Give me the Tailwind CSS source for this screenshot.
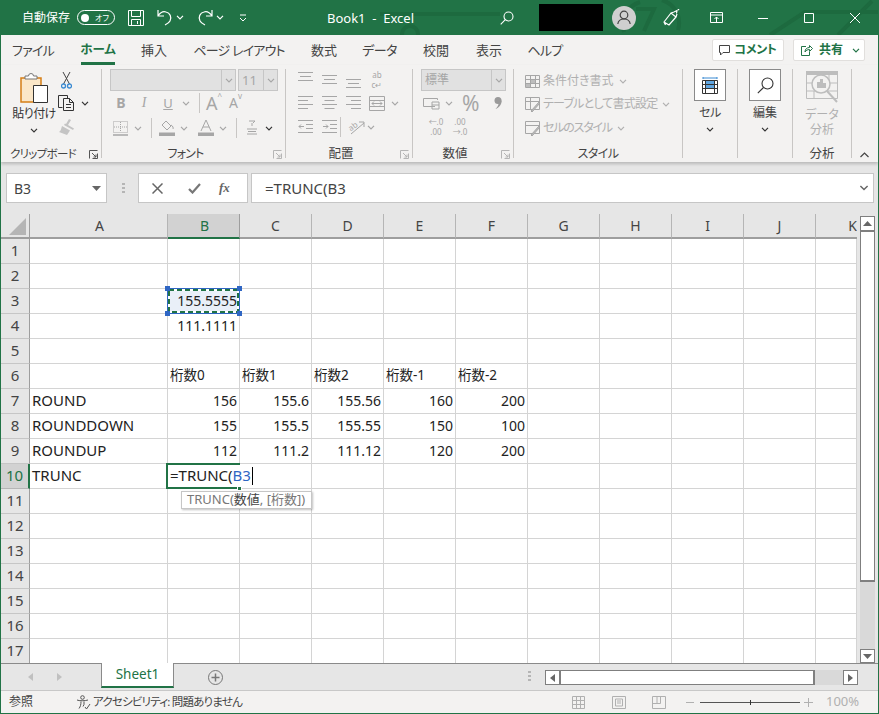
<!DOCTYPE html>
<html lang="ja">
<head>
<meta charset="UTF-8">
<title>Book1 - Excel</title>
<script src="https://cdn.jsdelivr.net/npm/@tailwindcss/browser@4"></script>
</head>
<body class="bg-[#e6e6e6]">
<!-- shared small icons -->
<svg class="hidden">
  <symbol id="chev" viewBox="0 0 8 5"><path d="M1 .8l3 3 3-3" fill="none" stroke="currentColor" stroke-width="1.2"/></symbol>
  <symbol id="launch" viewBox="0 0 9 9"><path d="M.5 8.500v-8h8M8.500 3.500v5h-5M3 3l4 4M7 4.500V7H4.500" fill="none" stroke="currentColor"/></symbol>
  <symbol id="tri-down" viewBox="0 0 9 5"><path d="M0 0h9L4.500 5z" fill="currentColor"/></symbol>
</svg>

<div class="w-[879px] h-[714px] overflow-hidden flex flex-col border-x border-b border-[#217346] [font-family:'Noto_Sans','Noto_Sans_CJK_JP',sans-serif] [font-feature-settings:'palt'] text-[#444]">

  <!-- title bar -->
  <div class="relative h-[35px] -mx-px bg-[#217346] text-white flex items-center shrink-0 overflow-hidden">
    <svg class="absolute inset-0" width="879" height="35" fill="none" stroke="#1d6a3f" stroke-width="4">
      <path d="M380 14h120M640 2a24 24 0 0 0-16 30M662 0a24 24 0 0 1 16 30M636 9h18l-10 22M770 35l35-23h74M838 35l34-34"/>
      <circle cx="410" cy="34" r="8"/>
    </svg>
    <div class="relative flex items-center">
      <span class="ml-[22px] w-[48px] text-[12px] whitespace-nowrap">自動保存</span>
      <div class="ml-[7px] w-[38px] h-[15px] rounded-full border border-white flex items-center px-[3px]">
        <span class="w-[8px] h-[8px] rounded-full bg-white"></span>
        <span class="ml-[6px] text-[8px] leading-none">オフ</span>
      </div>
      <svg class="ml-[13px]" width="16" height="16" viewBox="0 0 16 16" fill="none" stroke="#fff"><path d="M.5.500h15v15H.5zM3.500.5v6h9v-6M3.500 15.500v-6h9v6M9.500 11v3"/></svg>
      <svg class="ml-[13px]" width="16" height="17" viewBox="0 0 16 17" fill="none" stroke="#fff" stroke-width="1.200"><path d="M1 1v6h6M1 7c2-3 5-5 8-4 4 1 6 5 4 9-1 2-3 3-5 4"/></svg>
      <svg class="ml-[3px]" width="8" height="5" color="#fff"><use href="#chev"/></svg>
      <svg class="ml-[13px]" width="16" height="17" viewBox="0 0 16 17" fill="none" stroke="#fff" stroke-width="1.200"><path d="M15 1v6H9M15 7c-2-3-5-5-8-4-4 1-6 5-4 9 1 2 3 3 5 4"/></svg>
      <svg class="ml-[3px]" width="8" height="5" color="#fff"><use href="#chev"/></svg>
      <svg class="ml-[15px]" width="8" height="8" viewBox="0 0 8 8" fill="none" stroke="#fff"><path d="M1 1h6M1 4l3 3 3-3"/></svg>
      <span class="ml-[80px] w-[87px] pt-[3px] text-[13px] whitespace-pre flex justify-center">Book1  -  Excel</span>
      <svg class="ml-[86px]" width="14" height="14" viewBox="0 0 14 14" fill="none" stroke="#fff" stroke-width="1.100"><circle cx="8.500" cy="5.500" r="4.500"/><path d="M5.300 8.700L.7 13.300"/></svg>
      <div class="ml-[25px] w-[64px] h-[27px] bg-black"></div>
      <div class="ml-[9px] w-[24px] h-[24px] rounded-full bg-[#cfcfcf] flex items-center justify-center">
        <svg width="14" height="15" viewBox="0 0 14 15" fill="none" stroke="#444" stroke-width="1.200"><circle cx="7" cy="5" r="3.800"/><path d="M.8 14c.5-3.500 3-5 6.200-5s5.700 1.500 6.200 5"/></svg>
      </div>
      <svg class="ml-[27px]" width="17" height="17" viewBox="0 0 17 17" fill="none" stroke="#fff" stroke-width="1.200"><path d="M1 13l7-9 5 4-7 8zM1 13l1.500 3M11 3l3-1.500-.5 3M8 4l3-1M13 8l1-3M15 1l1-1"/></svg>
      <svg class="ml-[30px]" width="13" height="11" viewBox="0 0 13 11" fill="none" stroke="#fff"><path d="M.5.500h12v10H.5zM.5 3h12" stroke-width="1"/><path d="M6.500 10V5M4.500 7l2-2 2 2"/></svg>
      <svg class="ml-[35px]" width="10" height="10" viewBox="0 0 10 10" stroke="#fff"><path d="M0 5.500h10"/></svg>
      <svg class="ml-[36px]" width="10" height="10" viewBox="0 0 10 10" fill="none" stroke="#fff"><path d="M.5.500h9v9h-9z"/></svg>
      <svg class="ml-[36px]" width="10" height="10" viewBox="0 0 10 10" stroke="#fff"><path d="M0 0l10 10M10 0L0 10"/></svg>
    </div>
  </div>

  <!-- ribbon tabs -->
  <div class="h-[30px] bg-[#f3f2f1] flex items-center text-[13px] whitespace-nowrap shrink-0">
    <span class="ml-[13px] w-[38px] pt-[2px] flex justify-center tracking-[-0.8px]">ファイル</span>
    <span class="ml-[29px] w-[34px] h-full flex justify-center items-center font-bold text-[12.500px] text-[#217346] border-b-[3px] border-[#217346] pt-[4px]">ホーム</span>
    <span class="ml-[26px] w-[26px] pt-[2px] flex justify-center">挿入</span>
    <span class="ml-[29px] w-[86px] pt-[2px] flex justify-center tracking-[-0.8px]">ページ レイアウト</span>
    <span class="ml-[29px] w-[26px] pt-[2px] flex justify-center">数式</span>
    <span class="ml-[26px] w-[33px] pt-[2px] flex justify-center tracking-[-0.5px]">データ</span>
    <span class="ml-[27px] w-[26px] pt-[2px] flex justify-center">校閲</span>
    <span class="ml-[27px] w-[26px] pt-[2px] flex justify-center">表示</span>
    <span class="ml-[27px] w-[32px] pt-[2px] flex justify-center tracking-[-0.7px]">ヘルプ</span>
    <div class="ml-[151px] w-[72px] h-[22px] bg-white border border-[#e1dfdd] rounded-[2px] flex items-center justify-center gap-[4px] font-bold text-[#217346] text-[12px] tracking-[-0.3px]">
      <svg width="11" height="11" viewBox="0 0 11 11" fill="none" stroke="#444"><path d="M.5.500h10v7H4l-2.500 2.500V7.500h-1z"/></svg>コメント
    </div>
    <div class="ml-[9px] w-[72px] h-[22px] bg-white border border-[#e1dfdd] rounded-[2px] flex items-center pl-[7px] font-bold text-[#217346] text-[12px]">
      <svg class="mr-[6px]" width="12" height="12" viewBox="0 0 12 12" fill="none" stroke="#217346"><path d="M5 2.500H.5v9h8V8M4 8c0-3 2-4.500 4.500-4.500V1.500l3 3-3 3V5.500C6.500 5.500 5 6.500 4 8z"/></svg>共有
      <svg class="ml-[9px]" width="8" height="5" color="#217346"><use href="#chev"/></svg>
    </div>
  </div>

  <!-- ribbon groups -->
  <div class="h-[97px] bg-[#f3f2f1] flex pt-[4px] text-[12px] shadow-[0_2px_3px_rgba(0,0,0,0.2)] relative shrink-0 whitespace-nowrap">

    <!-- clipboard -->
    <div class="w-[101px] h-[89px] border-r border-[#c8c6c4] flex flex-col">
      <div class="h-[78px] shrink-0 flex">
        <div class="ml-[8px] w-[50px] flex flex-col items-center">
          <svg class="mt-[4px]" width="28" height="30" viewBox="0 0 28 30" fill="none">
            <path d="M1 5h20v24H1z" fill="#fbe7c8" stroke="#d67f16" stroke-width="1.500"/>
            <path d="M5 6V3h3.500a2.500 2.500 0 0 1 5 0H17v3z" fill="#fff" stroke="#777"/>
            <path d="M13.500 12.500h14v17h-14z" fill="#fff" stroke="#333"/>
          </svg>
          <span class="mt-[3px] text-[12px] tracking-[-0.6px] leading-[16px] text-[#333]">貼り付け</span>
          <svg class="mt-[6px]" width="8" height="5" color="#333"><use href="#chev"/></svg>
        </div>
        <div class="flex flex-col pt-[3px]">
          <svg class="ml-[2px]" width="11" height="17" viewBox="0 0 11 17" fill="none"><path d="M2 0l6.500 12M9 0L2.500 12" stroke="#444"/><circle cx="2.500" cy="14" r="2" stroke="#3a8ad2" stroke-width="1.300"/><circle cx="8.500" cy="14" r="2" stroke="#3a8ad2" stroke-width="1.300"/></svg>
          <div class="mt-[6px] -ml-[1px] flex items-center">
            <svg width="17" height="16" viewBox="0 0 17 16" fill="none" stroke="#333"><path d="M4.500 12.500H.5V.5h9V3"/><path d="M5.500 3.500h6l4 4v8h-10zM11.500 3.500v4h4M8 9.500h5M8 12.500h5"/></svg>
            <svg class="ml-[6px]" width="8" height="5" color="#333"><use href="#chev"/></svg>
          </div>
          <svg class="mt-[8px] -ml-[1px]" width="17" height="16" viewBox="0 0 17 16" fill="#c4c4c4"><path d="M11 0l2 1-3 5 6 3.500-1 1.500-9-5 1-1.500 1 .5zM4 7l8 4.500-3 4.500-8-3c2-1 2-3 3-6z"/></svg>
        </div>
      </div>
      <div class="relative h-[14px] shrink-0 leading-[14px] text-center pr-[16px] text-[11.500px] tracking-[-0.7px]">クリップボード
        <svg class="absolute right-[3px] top-[3px]" width="9" height="9" color="#555"><use href="#launch"/></svg>
      </div>
    </div>

    <!-- font -->
    <div class="w-[184px] h-[89px] border-r border-[#c8c6c4] flex flex-col text-[#a6a6a6]">
      <div class="h-[78px] shrink-0 flex flex-col">
        <div class="h-[22px] flex ml-[8px]">
          <div class="w-[126px] bg-[#e1e1e1] border border-[#c6c6c6] flex justify-end">
            <div class="w-[14px] border-l border-[#c6c6c6] flex items-center justify-center"><svg width="8" height="5"><use href="#chev"/></svg></div>
          </div>
          <div class="ml-[2px] w-[40px] bg-[#e1e1e1] border border-[#c6c6c6] flex justify-between text-[13px] leading-[20px]">
            <span class="ml-[3px]">11</span>
            <div class="w-[14px] border-l border-[#c6c6c6] flex items-center justify-center"><svg width="8" height="5"><use href="#chev"/></svg></div>
          </div>
        </div>
        <div class="mt-[2px] h-[20px] flex items-center">
          <span class="ml-[12px] w-[14px] text-center font-bold text-[14px] leading-none">B</span>
          <span class="ml-[9px] w-[14px] text-center italic text-[14px] leading-none [font-family:'Liberation_Serif',serif]">I</span>
          <span class="ml-[10px] w-[14px] text-center underline text-[13px] leading-none">U</span>
          <svg class="ml-[7px]" width="8" height="5"><use href="#chev"/></svg>
          <span class="ml-[9px] w-px h-[20px] bg-[#c8c6c4]"></span>
          <span class="ml-[6px] w-[18px] text-[18px] leading-none">A<sup class="text-[8px] align-[7px]">^</sup></span>
          <span class="ml-[5px] w-[18px] text-[14px] leading-none">A<sup class="text-[8px] align-[5px]">v</sup></span>
        </div>
        <div class="mt-[5px] h-[20px] flex items-center">
          <svg class="ml-[11px]" width="15" height="15" viewBox="0 0 15 15" fill="none" stroke="#a6a6a6"><path d="M.5.500h14v11H.5z" stroke-dasharray="1 1"/><path d="M7.500 1v10M1 6h13" stroke-dasharray="1 1"/><path d="M0 14h15" stroke-width="1.500"/></svg>
          <svg class="ml-[6px]" width="8" height="5"><use href="#chev"/></svg>
          <span class="ml-[9px] w-px h-[20px] bg-[#c8c6c4]"></span>
          <svg class="ml-[7px]" width="16" height="16" viewBox="0 0 16 16" fill="none" stroke="#a6a6a6"><path d="M7 1l5 5-4 4-5-5zM12 5c2 1 2.500 3 2 4"/><path d="M0 13h16v3H0z" fill="#a6a6a6"/></svg>
          <svg class="ml-[5px]" width="8" height="5"><use href="#chev"/></svg>
          <svg class="ml-[10px]" width="16" height="16" viewBox="0 0 16 16" fill="none" stroke="#a6a6a6"><path d="M3 11L8 0l5 11M5 7h6"/><path d="M0 13h16v3H0z" fill="#a6a6a6"/></svg>
          <svg class="ml-[5px]" width="8" height="5"><use href="#chev"/></svg>
          <span class="ml-[9px] w-px h-[20px] bg-[#c8c6c4]"></span>
          <svg class="ml-[9px]" width="12" height="16" viewBox="0 0 12 16" fill="none" stroke="#a6a6a6"><path d="M3 1h6l-2 2M6 3v3M1 9h10M2 11.500h8M1 14h10"/></svg>
          <svg class="ml-[7px]" width="8" height="5" color="#333"><use href="#chev"/></svg>
        </div>
      </div>
      <div class="relative h-[14px] shrink-0 leading-[14px] text-center pr-[16px] text-[#444] tracking-[-0.8px]">フォント
        <svg class="absolute right-[3px] top-[3px]" width="9" height="9" color="#b5b5b5"><use href="#launch"/></svg>
      </div>
    </div>

    <!-- alignment -->
    <div class="w-[127px] h-[89px] border-r border-[#c8c6c4] flex flex-col">
      <div class="h-[78px] shrink-0 pl-[7px] grid grid-cols-[24px_24px_24px_24px_28px] grid-rows-[22px_24px_24px] place-items-center">
        <svg width="15" height="18" viewBox="0 0 15 18" stroke="#a6a6a6"><path d="M0 1.500h15M2 5.500h11M0 9.500h15"/></svg>
        <svg width="15" height="18" viewBox="0 0 15 18" stroke="#a6a6a6"><path d="M0 4.500h15M2 8.500h11M0 12.500h15"/></svg>
        <svg width="15" height="18" viewBox="0 0 15 18" stroke="#a6a6a6"><path d="M0 8.500h15M2 12.500h11M0 16.500h15"/></svg>
        <div class="flex flex-col items-center text-[8px] leading-[10px] text-[#a6a6a6]"><span>ab</span><span>c↵</span></div>
        <span></span>
        <svg width="15" height="14" viewBox="0 0 15 14" stroke="#a6a6a6"><path d="M0 .5h15M0 4.500h10M0 8.500h15M0 12.500h10"/></svg>
        <svg width="15" height="14" viewBox="0 0 15 14" stroke="#a6a6a6"><path d="M0 .5h15M2.500 4.500h10M0 8.500h15M2.500 12.500h10"/></svg>
        <svg width="15" height="14" viewBox="0 0 15 14" stroke="#a6a6a6"><path d="M0 .5h15M5 4.500h10M0 8.500h15M5 12.500h10"/></svg>
        <svg width="16" height="15" viewBox="0 0 16 15" fill="none" stroke="#a6a6a6"><path d="M.5.500h15v14H.5zM.5 4.500h15M.5 10.500h15M3 7.500h10M5 5.500l-2 2 2 2M11 5.500l2 2-2 2"/></svg>
        <svg class="justify-self-start ml-[2px]" width="8" height="5" color="#a6a6a6"><use href="#chev"/></svg>
        <svg width="15" height="14" viewBox="0 0 15 14" fill="none" stroke="#a6a6a6"><path d="M0 .5h15M8 4.500h7M8 8.500h7M0 12.500h15M6 6.500H1M3 4.500l-2 2 2 2"/></svg>
        <svg width="15" height="14" viewBox="0 0 15 14" fill="none" stroke="#a6a6a6"><path d="M0 .5h15M8 4.500h7M8 8.500h7M0 12.500h15M1 6.500h5M4 4.500l2 2-2 2"/></svg>
        <div class="col-span-3 flex items-center justify-self-start self-center h-[20px]">
          <span class="w-px h-[20px] bg-[#c8c6c4] -ml-[1px]"></span>
          <svg class="ml-[7px] overflow-visible" width="17" height="15" viewBox="0 0 17 15" fill="none" stroke="#a6a6a6"><path d="M3 14L16 3M11 2h5v5"/><text x="1" y="10" font-size="8" fill="#a6a6a6" stroke="none" transform="rotate(-38 4 8)">ab</text></svg>
          <svg class="ml-[2px]" width="8" height="5" color="#a6a6a6"><use href="#chev"/></svg>
        </div>
      </div>
      <div class="relative h-[14px] shrink-0 leading-[14px] text-center pr-[16px] text-[12.500px]">配置
        <svg class="absolute right-[3px] top-[3px]" width="9" height="9" color="#b5b5b5"><use href="#launch"/></svg>
      </div>
    </div>

    <!-- number -->
    <div class="w-[101px] h-[89px] border-r border-[#c8c6c4] flex flex-col text-[#a6a6a6]">
      <div class="h-[78px] shrink-0 flex flex-col">
        <div class="ml-[8px] w-[85px] h-[22px] bg-[#e1e1e1] border border-[#c6c6c6] flex justify-between leading-[20px]">
          <span class="ml-[3px]">標準</span>
          <div class="w-[14px] border-l border-[#c6c6c6] flex items-center justify-center"><svg width="8" height="5"><use href="#chev"/></svg></div>
        </div>
        <div class="h-[24px] flex items-center">
          <svg class="ml-[10px]" width="17" height="14" viewBox="0 0 17 14" fill="none" stroke="#a6a6a6"><path d="M12 10.500H.5v-8h14V4M9 6h7v7H9zM9 9h7"/></svg>
          <svg class="ml-[5px]" width="8" height="5"><use href="#chev"/></svg>
          <span class="ml-[9px] w-[19px] text-[21px] leading-none">%</span>
          <svg class="ml-[13px]" width="8" height="12" viewBox="0 0 8 12" fill="#9a9a9a"><circle cx="4" cy="3.500" r="3.500"/><path d="M7.500 3.500C8 7 5 11 1.500 12 4 9.500 4.500 8 4.500 6z"/></svg>
        </div>
        <div class="h-[24px] flex items-center text-[8px] leading-[10px]">
          <div class="ml-[14px] w-[18px] flex flex-col items-center"><span>←.0</span><span>.00</span></div>
          <div class="ml-[6px] w-[18px] flex flex-col items-center"><span>.00</span><span>→.0</span></div>
        </div>
      </div>
      <div class="relative h-[14px] shrink-0 leading-[14px] text-center pr-[16px] text-[12.500px] text-[#444]">数値
        <svg class="absolute right-[3px] top-[3px]" width="9" height="9" color="#b5b5b5"><use href="#launch"/></svg>
      </div>
    </div>

    <!-- styles -->
    <div class="w-[169px] h-[89px] border-r border-[#c8c6c4] flex flex-col text-[#b0b0b0]">
      <div class="h-[78px] shrink-0 pl-[11px] pt-[1px] grid grid-rows-[22px_24px_24px] items-center">
        <div class="flex items-center gap-[3px]">
          <svg width="15" height="13" viewBox="0 0 15 13" fill="none" stroke="#a6a6a6"><path d="M.5.500h14v12H.5zM.5 4.500h14M.5 8.500h14M5.500.5v12M10.500.5v12"/><path d="M6 5h4v3H6zM1 9h4v3H1z" fill="#bdbdbd" stroke="none"/></svg>
          <span>条件付き書式</span><svg class="ml-[2px]" width="8" height="5"><use href="#chev"/></svg>
        </div>
        <div class="flex items-center gap-[3px]">
          <svg width="15" height="15" viewBox="0 0 15 15" fill="none" stroke="#a6a6a6"><path d="M.5.500h14v12H.5zM.5 4.500h14M5.500.5v12"/><path d="M6 14l8-9 1 1-8 9z" fill="#bdbdbd"/></svg>
          <span class="tracking-[-0.8px]">テーブルとして書式設定</span><svg class="ml-[2px]" width="8" height="5"><use href="#chev"/></svg>
        </div>
        <div class="flex items-center gap-[3px]">
          <svg width="15" height="15" viewBox="0 0 15 15" fill="none" stroke="#a6a6a6"><path d="M.5.500h14v12H.5zM.5 4.500h14"/><path d="M6 14l8-9 1 1-8 9z" fill="#bdbdbd"/></svg>
          <span class="tracking-[-1.200px]">セルのスタイル</span><svg class="ml-[2px]" width="8" height="5"><use href="#chev"/></svg>
        </div>
      </div>
      <div class="h-[14px] shrink-0 leading-[14px] text-center text-[#444] tracking-[-0.6px]">スタイル</div>
    </div>

    <!-- cells -->
    <div class="w-[55px] h-[89px] border-r border-[#c8c6c4] flex flex-col items-center">
      <div class="h-[78px] shrink-0 flex flex-col items-center">
        <div class="w-[32px] h-[32px] bg-white border border-[#8a8a8a] flex items-center justify-center">
          <svg width="16" height="17" viewBox="0 0 16 17" fill="none"><path d="M1 1h14M1 0v2M15 0v2" stroke="#3a8ad2"/><path d="M3.500 4h9v7h-9z" fill="#5fa5e0"/><path d="M.5 3.500h15v13H.5zM.5 7.500h15M.5 11.500h15M3.500 3.500v13M12.500 3.500v13" stroke="#333"/></svg>
        </div>
        <span class="mt-[4px] leading-[16px] tracking-[-0.5px]">セル</span>
        <svg class="mt-[6px]" width="8" height="5" color="#333"><use href="#chev"/></svg>
      </div>
    </div>

    <!-- editing -->
    <div class="w-[55px] h-[89px] border-r border-[#c8c6c4] flex flex-col items-center">
      <div class="h-[78px] shrink-0 flex flex-col items-center">
        <div class="w-[32px] h-[32px] bg-white border border-[#8a8a8a] flex items-center justify-center">
          <svg width="17" height="17" viewBox="0 0 17 17" fill="none" stroke="#333" stroke-width="1.100"><circle cx="10.500" cy="6.500" r="5.500"/><path d="M6.500 10.500L.8 16.200"/></svg>
        </div>
        <span class="mt-[4px] leading-[16px]">編集</span>
        <svg class="mt-[6px]" width="8" height="5" color="#333"><use href="#chev"/></svg>
      </div>
    </div>

    <!-- analysis -->
    <div class="w-[59px] h-[89px] border-r border-[#c8c6c4] flex flex-col items-center">
      <div class="h-[78px] shrink-0 flex flex-col items-center text-[#b0b0b0]">
        <svg class="mt-[2px]" width="32" height="32" viewBox="0 0 32 32" fill="none" stroke="#bdbdbd">
          <path d="M.5.500h31v27H.5zM.5 3.500h31M.5 12h9M.5 20h9M22 12h9M22 20h9M8 20v8M23 3v8" />
          <path d="M0 0h32v3H0z" fill="#bdbdbd" stroke="none"/>
          <circle cx="15" cy="13" r="9" stroke-width="1.500" fill="#f3f2f1"/>
          <path d="M11 11h3v6h-3zM14 8h3v9h-3zM17 12h3v5h-3z" fill="#bdbdbd" stroke="none"/>
          <path d="M21 20l10 11" stroke-width="2"/>
        </svg>
        <span class="mt-[4px] leading-[15px] text-center">データ<br>分析</span>
      </div>
      <div class="h-[14px] shrink-0 leading-[14px] text-center text-[12.500px]">分析</div>
    </div>

    <svg class="ml-[8px] mt-[83px]" width="9" height="6" viewBox="0 0 9 6" fill="none" stroke="#444" stroke-width="1.200"><path d="M.5 5l4-4 4 4"/></svg>
  </div>

  <!-- formula bar -->
  <div class="h-[52px] bg-[#e6e6e6] flex items-start pt-[11px] shrink-0">
    <div class="ml-[5px] w-[101px] h-[30px] bg-white border border-[#c6c6c6] flex items-center justify-between pl-[7px] pr-[5px] text-[14px]">
      B3
      <svg width="9" height="5" color="#666"><use href="#tri-down"/></svg>
    </div>
    <div class="ml-[15px] w-[3px] h-[30px] flex flex-col justify-center gap-[2px]">
      <span class="h-[2px] bg-[#b5b5b5]"></span><span class="h-[2px] bg-[#b5b5b5]"></span><span class="h-[2px] bg-[#b5b5b5]"></span>
    </div>
    <div class="ml-[13px] w-[110px] h-[30px] bg-white border border-[#c6c6c6] flex items-center">
      <svg class="ml-[13px]" width="11" height="11" viewBox="0 0 11 11" stroke="#666" stroke-width="1.500"><path d="M.5.500l10 10M10.500.5l-10 10"/></svg>
      <svg class="ml-[25px]" width="13" height="11" viewBox="0 0 13 11" fill="none" stroke="#777" stroke-width="2.200"><path d="M1 6l3.500 3.500L12 1"/></svg>
      <span class="ml-[18px] text-[13px] italic font-bold text-[#666] [font-family:'Liberation_Serif',serif]">fx</span>
    </div>
    <div class="ml-[3px] w-[623px] h-[30px] bg-white border border-[#c6c6c6] flex items-center justify-between pl-[13px] pr-[4px] text-[15px]">
      <span>=TRUNC(B3</span>
      <svg width="10" height="6" viewBox="0 0 8 5" color="#666"><use href="#chev"/></svg>
    </div>
  </div>

  <!-- sheet + vertical scrollbar -->
  <div class="h-[449px] flex bg-[#e6e6e6] shrink-0">
    <div class="relative w-[856px] h-[449px] overflow-hidden">
      <div id="grid" class="grid grid-cols-[29px_138px_repeat(9,72px)_41px] grid-rows-[25px_repeat(17,25px)]">
        <div class="bg-[#e6e6e6] border-r border-b-2 border-[#9e9e9e] flex items-end pb-[2px] pl-[8px]">
          <svg width="17" height="17"><path d="M17 0v17H0z" fill="#b5b5b5"/></svg>
        </div>
      </div>

      <!-- copy marquee on B3 -->
      <div class="absolute left-[166px] top-[74px] w-[73px] h-[26px]">
        <svg class="block" width="73" height="26" fill="none">
          <rect x=".5" y=".5" width="72" height="25" stroke="#2f66c4"/>
          <rect x="2" y="2" width="69" height="22" stroke="#fff" stroke-width="2"/>
          <rect x="2" y="2" width="69" height="22" stroke="#217346" stroke-width="2" stroke-dasharray="5 3"/>
        </svg>
        <span class="absolute -left-[2px] -top-[2px] w-[5px] h-[5px] bg-[#2f66c4]"></span>
        <span class="absolute -right-[2px] -top-[2px] w-[5px] h-[5px] bg-[#2f66c4]"></span>
        <span class="absolute -left-[2px] -bottom-[2px] w-[5px] h-[5px] bg-[#2f66c4]"></span>
        <span class="absolute -right-[2px] -bottom-[2px] w-[5px] h-[5px] bg-[#2f66c4]"></span>
      </div>

      <!-- in-cell editor on B10 -->
      <div class="absolute left-[165px] top-[249px] w-[74px] h-[26px] border-y-2 border-l-2 border-[#217346] bg-white flex items-center pl-[2px] pb-[1px] text-[15px] text-[#222] whitespace-nowrap">
        =TRUNC(<span class="text-[#2f66c4]">B3</span><span class="ml-px w-px h-[18px] bg-black shrink-0"></span>
        <span class="absolute -right-[2px] -bottom-[4px] w-[5px] h-[5px] bg-[#217346] border border-white"></span>
      </div>

      <!-- argument tooltip -->
      <div class="absolute left-[180px] top-[277px] w-[131px] h-[18px] bg-white border border-[#c6c6c6] shadow-[1px_1px_2px_rgba(0,0,0,0.25)] flex items-center pl-[5px] text-[13px] text-[#777] whitespace-nowrap">
        TRUNC(<span class="text-[#444]">数値</span>, [桁数])
      </div>
    </div>

    <div class="ml-[3px] mt-[2px] w-[15px] flex flex-col h-[447px] bg-[#d9d9d9]">
      <div class="h-[15px] bg-white border border-[#7f7f7f] flex items-center justify-center rotate-180"><svg width="9" height="5" color="#666"><use href="#tri-down"/></svg></div>
      <div class="h-[352px] bg-white border-x border-y-2 border-[#7f7f7f] -mt-px"></div>
      <div class="mt-auto h-[14px] bg-white border border-[#7f7f7f] flex items-center justify-center"><svg width="9" height="5" color="#666"><use href="#tri-down"/></svg></div>
    </div>
  </div>

  <!-- sheet tabs + horizontal scrollbar -->
  <div class="h-[28px] bg-[#e6e6e6] flex items-start border-t border-[#8a8a8a] border-b-[#c8c8c8] border-b shrink-0">
    <svg class="ml-[27px] mt-[9px]" width="5" height="8"><path d="M5 0v8L0 4z" fill="#c0c0c0"/></svg>
    <svg class="ml-[24px] mt-[9px]" width="5" height="8"><path d="M0 0v8l5-4z" fill="#c0c0c0"/></svg>
    <div class="ml-[39px] -mt-px w-[73px] h-[25px] bg-white border-x border-[#8a8a8a] border-b-2 border-b-[#217346] flex items-center justify-center text-[13.500px] text-[#217346]">Sheet1</div>
    <svg class="ml-[34px] mt-[6px]" width="15" height="15" viewBox="0 0 15 15" fill="none" stroke="#777"><circle cx="7.500" cy="7.500" r="7"/><path d="M3.500 7.500h8M7.500 3.500v8" stroke-width="1.500"/></svg>
    <div class="ml-[305px] mt-[7px] w-[3px] flex flex-col gap-[2px]">
      <span class="h-[2px] bg-[#b5b5b5]"></span><span class="h-[2px] bg-[#b5b5b5]"></span><span class="h-[2px] bg-[#b5b5b5]"></span>
    </div>
    <div class="ml-[14px] mt-[6px] w-[313px] h-[15px] flex bg-[#d9d9d9]">
      <div class="w-[15px] bg-white border border-[#7f7f7f] flex items-center justify-center"><svg width="5" height="8"><path d="M5 0v8L0 4z" fill="#666"/></svg></div>
      <div class="w-[256px] bg-white border-y border-x-2 border-[#7f7f7f] -ml-px"></div>
      <div class="ml-auto w-[15px] bg-white border border-[#7f7f7f] flex items-center justify-center"><svg width="5" height="8"><path d="M0 0v8l5-4z" fill="#666"/></svg></div>
    </div>
  </div>

  <!-- status bar -->
  <div class="flex-1 bg-[#f3f2f1] flex items-center text-[12px] whitespace-nowrap">
    <span class="ml-[8px] w-[24px]">参照</span>
    <svg class="ml-[43px]" width="15" height="15" viewBox="0 0 15 15" fill="none" stroke="#555"><circle cx="6.500" cy="2.500" r="1.800"/><path d="M1 5c2 1 8 1 11 0M5 6.500c0 3-.5 5-2 7M8 6.500v3l-1 2M9 12l1.500 2L14 9"/></svg>
    <span class="ml-[2px] w-[148px] text-[11.500px] tracking-[-0.8px]">アクセシビリティ: 問題ありません</span>
    <svg class="ml-[331px]" width="13" height="13" viewBox="0 0 13 13" fill="none" stroke="#b0b0b0"><path d="M.5.500h12v12H.5zM4.500.5v12M8.500.5v12M.5 4.500h12M.5 8.500h12"/></svg>
    <svg class="ml-[27px]" width="14" height="13" viewBox="0 0 14 13" fill="none" stroke="#b0b0b0"><path d="M.5.500h13v12H.5zM3.500 3h7v7h-7zM5 5h4M5 7h4"/></svg>
    <svg class="ml-[26px]" width="14" height="13" viewBox="0 0 14 13" fill="none" stroke="#b0b0b0"><path d="M.5.500h13v12H.5zM.5 7.500h8v-7M5 .5v7"/></svg>
    <span class="ml-[20px] w-[8px] h-px bg-[#b0b0b0]"></span>
    <div class="ml-[6px] w-[100px] h-px bg-[#555] flex justify-center items-center"><span class="w-px h-[5px] bg-[#333]"></span></div>
    <svg class="ml-[4px]" width="9" height="9" stroke="#b0b0b0"><path d="M0 4.500h9M4.500 0v9"/></svg>
    <span class="ml-[13px] text-[#b0b0b0] text-[13px]">100%</span>
  </div>
</div>

<script>
const grid = document.getElementById('grid');
const cols = ['A','B','C','D','E','F','G','H','I','J','K'];
const data = {
  3: {B:'155.5555'},
  4: {B:'111.1111'},
  6: {B:'桁数0', C:'桁数1', D:'桁数2', E:'桁数-1', F:'桁数-2'},
  7: {A:'ROUND', B:'156', C:'155.6', D:'155.56', E:'160', F:'200'},
  8: {A:'ROUNDDOWN', B:'155', C:'155.5', D:'155.55', E:'150', F:'100'},
  9: {A:'ROUNDUP', B:'112', C:'111.2', D:'111.12', E:'120', F:'200'},
  10: {A:'TRUNC'},
};

function add(cls, text) {
  const d = document.createElement('div');
  d.className = cls;
  if (text) d.textContent = text;
  grid.appendChild(d);
}

for (const c of cols) {
  if (c === 'B') add('bg-[#d2d2d2] border-r border-[#9e9e9e] border-b-2 border-b-[#217346] text-[#217346] text-[14px] flex items-center justify-center pl-[2px]', c);
  else if (c === 'K') add('bg-[#e6e6e6] border-b-2 border-b-[#9e9e9e] text-[14px] flex items-center justify-end', c);
  else if (c === 'A') add('bg-[#e6e6e6] border-r border-[#b5b5b5] border-b-2 border-b-[#9e9e9e] text-[14px] flex items-center justify-center pl-[2px]', c);
  else add('bg-[#e6e6e6] border-r border-[#b5b5b5] border-b-2 border-b-[#9e9e9e] text-[14px] flex items-center justify-center', c);
}
for (let r = 1; r <= 17; r++) {
  add(r === 10
    ? 'bg-[#d2d2d2] border-r-2 border-r-[#217346] border-b border-b-[#b5b5b5] text-[#217346] text-[15px] flex items-center justify-center pb-[2px]'
    : 'bg-[#e6e6e6] border-r border-r-[#9e9e9e] border-b border-b-[#c6c6c6] text-[15px] flex items-center justify-center pb-[2px]', String(r));
  for (const c of cols) {
    const v = (data[r] || {})[c];
    const right = v && c !== 'A' && r !== 6;
    let cls = 'border-r border-b border-[#d4d4d4] flex items-center whitespace-nowrap text-[#222] pb-[2px] ';
    if (right) cls += 'justify-end pr-[2px] text-[14px] ';
    else if (r === 6) cls += 'pl-[2px] text-[13.500px] ';
    else cls += 'pl-[2px] text-[15px] ';
    cls += (r === 3 && c === 'B') ? 'bg-[#e9eff8]' : 'bg-white';
    add(cls, v);
  }
}
</script>
</body>
</html>
